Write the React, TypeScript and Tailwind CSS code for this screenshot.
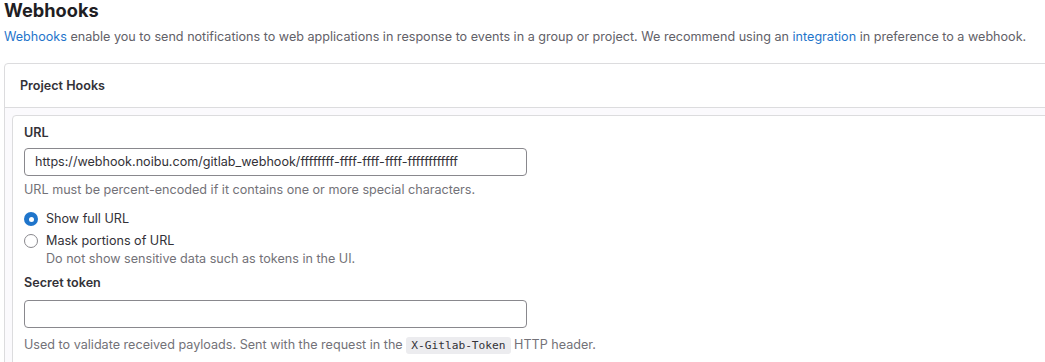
import React from "react";

function Radio({ checked }: { checked: boolean }) {
  return checked ? (
    <span className="flex h-[14px] w-[14px] shrink-0 items-center justify-center rounded-full bg-[#1f75cb]">
      <span className="h-[5px] w-[5px] rounded-full bg-white" />
    </span>
  ) : (
    <span className="h-[14px] w-[14px] shrink-0 rounded-full border border-[#89888d] bg-white" />
  );
}

export default function App() {
  return (
    <div
      className="h-[362px] w-[1045px] overflow-hidden bg-white px-1 text-[12.6px] leading-[18px] text-[#333238]"
      style={{ fontFamily: "Inter, 'Noto Sans', sans-serif" }}
    >
      <h1 className="text-[18.2px] font-bold leading-[20px] text-[#1f1e24]">Webhooks</h1>
      <p className="mt-[8px] text-[#626168]">
        <span className="text-[#1f75cb]">Webhooks</span> enable you to send notifications to web applications in
        response to events in a group or project. We recommend using an{" "}
        <span className="text-[#1f75cb]">integration</span> in preference to a webhook.
      </p>
      <div className="mt-[17px] w-[1080px] rounded-[4px] border border-[#dcdcde]">
        <div className="flex h-[44px] items-center border-b border-[#dcdcde] px-[15px] font-semibold">
          Project Hooks
        </div>
        <div className="bg-[#fbfafd] p-[7px]">
          <div className="rounded-[4px] border border-[#dcdcde] bg-white px-[11px] pt-[8px] pb-[20px]">
            <div className="font-semibold">URL</div>
            <div className="mt-[6px] flex h-[28px] w-[503px] items-center rounded-[4px] border border-[#89888d] px-[10px] text-[#333238]">
              https://webhook.noibu.com/gitlab_webhook/ffffffff-ffff-ffff-ffff-ffffffffffff
            </div>
            <div className="mt-[5px] text-[#737278]">
              URL must be percent-encoded if it contains one or more special characters.
            </div>
            <div className="mt-[11px] flex items-center gap-[8px]">
              <Radio checked />
              <span>Show full URL</span>
            </div>
            <div className="mt-[4px] flex items-center gap-[8px]">
              <Radio checked={false} />
              <span>Mask portions of URL</span>
            </div>
            <div className="pl-[22px] text-[#737278]">Do not show sensitive data such as tokens in the UI.</div>
            <div className="mt-[6px] font-semibold">Secret token</div>
            <div className="mt-[8px] h-[28px] w-[503px] rounded-[4px] border border-[#89888d]" />
            <div className="mt-[8px] text-[#737278]">
              Used to validate received payloads. Sent with the request in the{" "}
              <code
                className="rounded-[3px] bg-[#ececef] px-[5px] py-[2px] text-[11.2px] text-[#333238]"
                style={{ fontFamily: "'DejaVu Sans Mono', monospace" }}
              >
                X-Gitlab-Token
              </code>{" "}
              HTTP header.
            </div>
          </div>
        </div>
      </div>
    </div>
  );
}
